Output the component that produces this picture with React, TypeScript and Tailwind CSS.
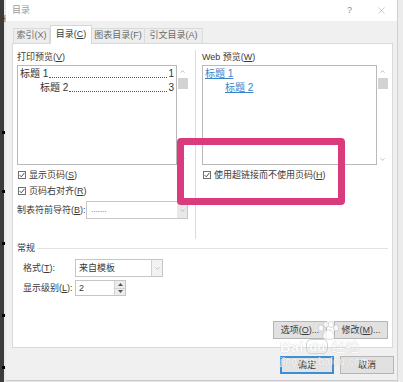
import { ChevronDown, ChevronUp, X } from "lucide-react";

function CheckBox({ children }: { children: React.ReactNode }) {
  return (
    <div className="flex h-[12px] items-center gap-[3px]">
      <span className="flex h-[8px] w-[8px] items-center justify-center border border-[#707070] bg-white">
        <svg width="6" height="6" viewBox="0 0 6 6">
          <path d="M0.6 3.1 L2.3 4.8 L5.4 0.9" fill="none" stroke="#3a3a3a" strokeWidth="0.9" />
        </svg>
      </span>
      <span className="leading-[12px]">{children}</span>
    </div>
  );
}

function ScrollBar() {
  return (
    <div className="flex w-[11px] flex-col items-center pb-[2px] pt-[3px]">
      <ChevronUp size={7} strokeWidth={1.6} color="#7a7a7a" />
      <div className="mt-[3px] h-[11px] w-[10px] bg-[#d2d2d2]" />
      <div className="flex-1" />
      <ChevronDown size={7} strokeWidth={1.6} color="#7a7a7a" />
    </div>
  );
}

function Button({ children, primary }: { children: React.ReactNode; primary?: boolean }) {
  return (
    <div
      className={
        primary
          ? "flex h-[18px] w-[54px] items-center justify-center border-2 border-[#3c8fd6] bg-[#e3e3e3] text-[9px] leading-[12px]"
          : "flex h-[18px] w-[54px] items-center justify-center border border-[#b5b5b5] bg-[#e1e1e1] text-[9px] leading-[12px]"
      }
    >
      {children}
    </div>
  );
}

// toc line with dotted leader up to the page number
function Leader({ text, page }: { text: string; page: string }) {
  return (
    <div className="flex items-end">
      <span className="shrink-0">{text}</span>
      <span className="mx-[1px] mb-[3px] min-w-0 flex-1 border-b border-dotted border-[#555]" />
      <span className="shrink-0">{page}</span>
    </div>
  );
}

function Paw() {
  return (
    <svg width="26" height="20" viewBox="0 0 26 20">
      <g fill="#ffffff" stroke="#c4c4c4" strokeWidth="0.8">
        <ellipse cx="6" cy="7" rx="2.6" ry="3.2" />
        <ellipse cx="11" cy="3.5" rx="2.6" ry="3" />
        <ellipse cx="16" cy="3.5" rx="2.6" ry="3" />
        <ellipse cx="21" cy="7" rx="2.6" ry="3.2" />
        <path d="M13.5 9 C9 9 7 14 8 16.5 C9 19 12 18 13.5 18 C15 18 18 19 19 16.5 C20 14 18 9 13.5 9 Z" />
      </g>
    </svg>
  );
}

export default function App() {
  return (
    <div className="relative flex h-[382px] w-[403px] overflow-hidden bg-[#e6e6e6] font-['Liberation_Sans','Noto_Sans_CJK_SC',sans-serif] text-[9px] text-[#3a3a3a]">
      {/* document edge on the left */}
      <div className="relative flex w-[6px]">
        <div className="w-[4px] bg-[#3b3b3b]" />
        <div className="flex-1 bg-[#e9e9e9]" />
        <span className="absolute left-[1px] top-[15px] text-[7px] leading-[8px] text-[#222]">ㅓ</span>
        <span className="absolute left-[2px] top-[131px] h-[3px] w-[3px] bg-black" />
        <span className="absolute left-[2px] top-[190px] h-[3px] w-[3px] bg-black" />
        <span className="absolute left-[2px] top-[242px] h-[3px] w-[3px] bg-black" />
        <span className="absolute left-[2px] top-[314px] h-[3px] w-[3px] bg-black" />
        <span className="absolute left-[2px] top-[366px] h-[3px] w-[3px] bg-black" />
      </div>

      {/* dialog */}
      <div className="flex h-[381px] w-[391px] flex-col border-b border-[#c9c9c9] bg-[#f0f0f0]">
        <div className="flex h-[21px] items-center bg-white pl-[6px] pr-[10px]">
          <span className="text-[9px] text-[#9a9a9a]">目录</span>
          <div className="flex-1" />
          <span className="mr-[24px] text-[9px] text-[#8a8a8a]">?</span>
          <X size={11} strokeWidth={1} color="#8a8a8a" />
        </div>

        {/* tabs */}
        <div className="ml-[7px] mt-[5px] flex h-[17px] items-end text-[#6a6a6a]">
          <div className="flex h-[15px] w-[37px] items-center justify-center border border-b-0 border-[#dadada] bg-[#ededed]">
            索引(X)
          </div>
          <div className="relative z-10 -mb-px flex h-[19px] w-[42px] items-center justify-center border border-b-0 border-[#d6d6d6] bg-white text-[#3a3a3a]">
            目录(<u>C</u>)
          </div>
          <div className="flex h-[15px] w-[53px] items-center justify-center border border-b-0 border-l-0 border-[#dadada] bg-[#ededed]">
            图表目录(F)
          </div>
          <div className="flex h-[15px] w-[58px] items-center justify-center border border-b-0 border-l-0 border-[#dadada] bg-[#ededed]">
            引文目录(A)
          </div>
        </div>

        {/* panel */}
        <div className="ml-[6px] mr-[4px] flex h-[305px] flex-col border border-[#d9d9d9] bg-white px-[4px] pb-[8px] pt-[7px]">
          <div className="flex h-[188px]">
            <div className="flex w-[171px] flex-col">
              <div className="h-[12px] leading-[12px]">
                打印预览(<u>V</u>)
              </div>
              <div className="mt-[2px] flex h-[100px]">
                <div className="min-w-0 flex-1 border border-[#b9b9b9] px-[2px] pt-[1px] text-[10px] leading-[14px] text-[#333]">
                  <Leader text="标题 1" page="1" />
                  <div className="pl-[20px]">
                    <Leader text="标题 2" page="3" />
                  </div>
                </div>
                <ScrollBar />
              </div>
              <div className="mt-[4px] pl-[1px]">
                <CheckBox>
                  显示页码(<u>S</u>)
                </CheckBox>
              </div>
              <div className="mt-[4px] pl-[1px]">
                <CheckBox>
                  页码右对齐(<u>R</u>)
                </CheckBox>
              </div>
              <div className="mt-[4px] flex h-[18px] items-center">
                <span className="w-[69px] leading-[12px]">
                  制表符前导符(<u>B</u>):
                </span>
                <div className="flex h-[18px] flex-1 border border-[#c6c6c6]">
                  <span className="flex-1 pl-[4px] text-[8px] leading-[16px] text-[#555]">.......</span>
                  <div className="flex w-[10px] items-center justify-center bg-[#e8e8e8]">
                    <ChevronDown size={7} strokeWidth={1.6} color="#8a8a8a" />
                  </div>
                </div>
              </div>
            </div>

            <div className="ml-[7px] mr-[6px] mt-[-1px] w-px bg-[#dcdcdc]" />

            <div className="flex w-[186px] flex-col">
              <div className="h-[12px] leading-[12px]">
                Web 预览(<u>W</u>)
              </div>
              <div className="mt-[2px] flex h-[100px]">
                <div className="min-w-0 flex-1 border border-[#b9b9b9] px-[2px] pt-[1px] text-[10px] leading-[14px] text-[#3d82c9]">
                  <div>
                    <span className="underline">标题 1</span>
                  </div>
                  <div className="pl-[20px]">
                    <span className="underline">标题 2</span>
                  </div>
                </div>
                <ScrollBar />
              </div>
              <div className="mt-[4px] pl-[1px]">
                <CheckBox>
                  使用超链接而不使用页码(<u>H</u>)
                </CheckBox>
              </div>
            </div>
          </div>

          <div className="mt-[3px] flex h-[12px] items-center">
            <span className="leading-[12px]">常规</span>
            <div className="ml-[2px] h-px flex-1 bg-[#e2e2e2]" />
          </div>

          <div className="mt-[5px] flex h-[18px] items-center pl-[6px]">
            <span className="w-[52px] leading-[12px]">
              格式(<u>T</u>):
            </span>
            <div className="flex h-[18px] w-[88px] border border-[#c6c6c6]">
              <span className="flex-1 pl-[3px] leading-[16px]">来自模板</span>
              <div className="flex w-[11px] items-center justify-center border-l border-[#d2d2d2] bg-[#f2f2f2]">
                <ChevronDown size={7} strokeWidth={1.6} color="#8a8a8a" />
              </div>
            </div>
          </div>

          <div className="mt-[3px] flex h-[16px] items-center pl-[6px]">
            <span className="w-[52px] leading-[12px]">
              显示级别(<u>L</u>):
            </span>
            <div className="flex h-[16px] w-[51px] border border-[#c6c6c6]">
              <span className="flex-1 pl-[3px] leading-[14px]">2</span>
              <div className="flex w-[11px] flex-col border-l border-[#d2d2d2]">
                <div className="flex flex-1 items-center justify-center border-b border-[#d2d2d2] bg-[#ececec]">
                  <svg width="5" height="3" viewBox="0 0 5 3">
                    <path d="M0 3 L2.5 0 L5 3 Z" fill="#555" />
                  </svg>
                </div>
                <div className="flex flex-1 items-center justify-center bg-[#ececec]">
                  <svg width="5" height="3" viewBox="0 0 5 3">
                    <path d="M0 0 L2.5 3 L5 0 Z" fill="#555" />
                  </svg>
                </div>
              </div>
            </div>
          </div>

          <div className="flex-1" />

          <div className="flex justify-end gap-[7px]">
            <Button>
              选项(<u>O</u>)...
            </Button>
            <Button>
              修改(<u>M</u>)...
            </Button>
          </div>
        </div>

        <div className="flex justify-end gap-[6px] pr-[3px] pt-[8px]">
          <Button primary>确定</Button>
          <Button>取消</Button>
        </div>
      </div>

      <div className="flex-1 border-l border-[#d0d0d0] bg-[#ececec]" />

      {/* pink highlight drawn over the dialog */}
      <div className="absolute left-[177px] top-[138px] h-[67px] w-[168px] rounded-[4px] border-[7px] border-[#d93b7c]" />

      {/* baidu watermark */}
      <div className="absolute left-[280px] top-[321px] flex flex-col items-start text-white opacity-80">
        <div className="ml-[35px]">
          <Paw />
        </div>
        <div className="-mt-[2px] flex items-end gap-[3px] font-['Liberation_Sans',sans-serif] [text-shadow:0_0_1px_#b0b0b0]">
          <span className="text-[15px] font-bold leading-[15px]">Bai</span>
          <span className="rounded-[5px] border border-[#c8c8c8] px-[2px] text-[13px] font-bold leading-[13px]">du</span>
          <span className="font-['Noto_Sans_CJK_SC',sans-serif] text-[14px] leading-[15px]">经验</span>
        </div>
        <div className="mt-[2px] text-[10px] leading-[11px] tracking-[0.5px] [text-shadow:0_0_1px_#b0b0b0]">
          jingyan.baidu.com
        </div>
      </div>
    </div>
  );
}
